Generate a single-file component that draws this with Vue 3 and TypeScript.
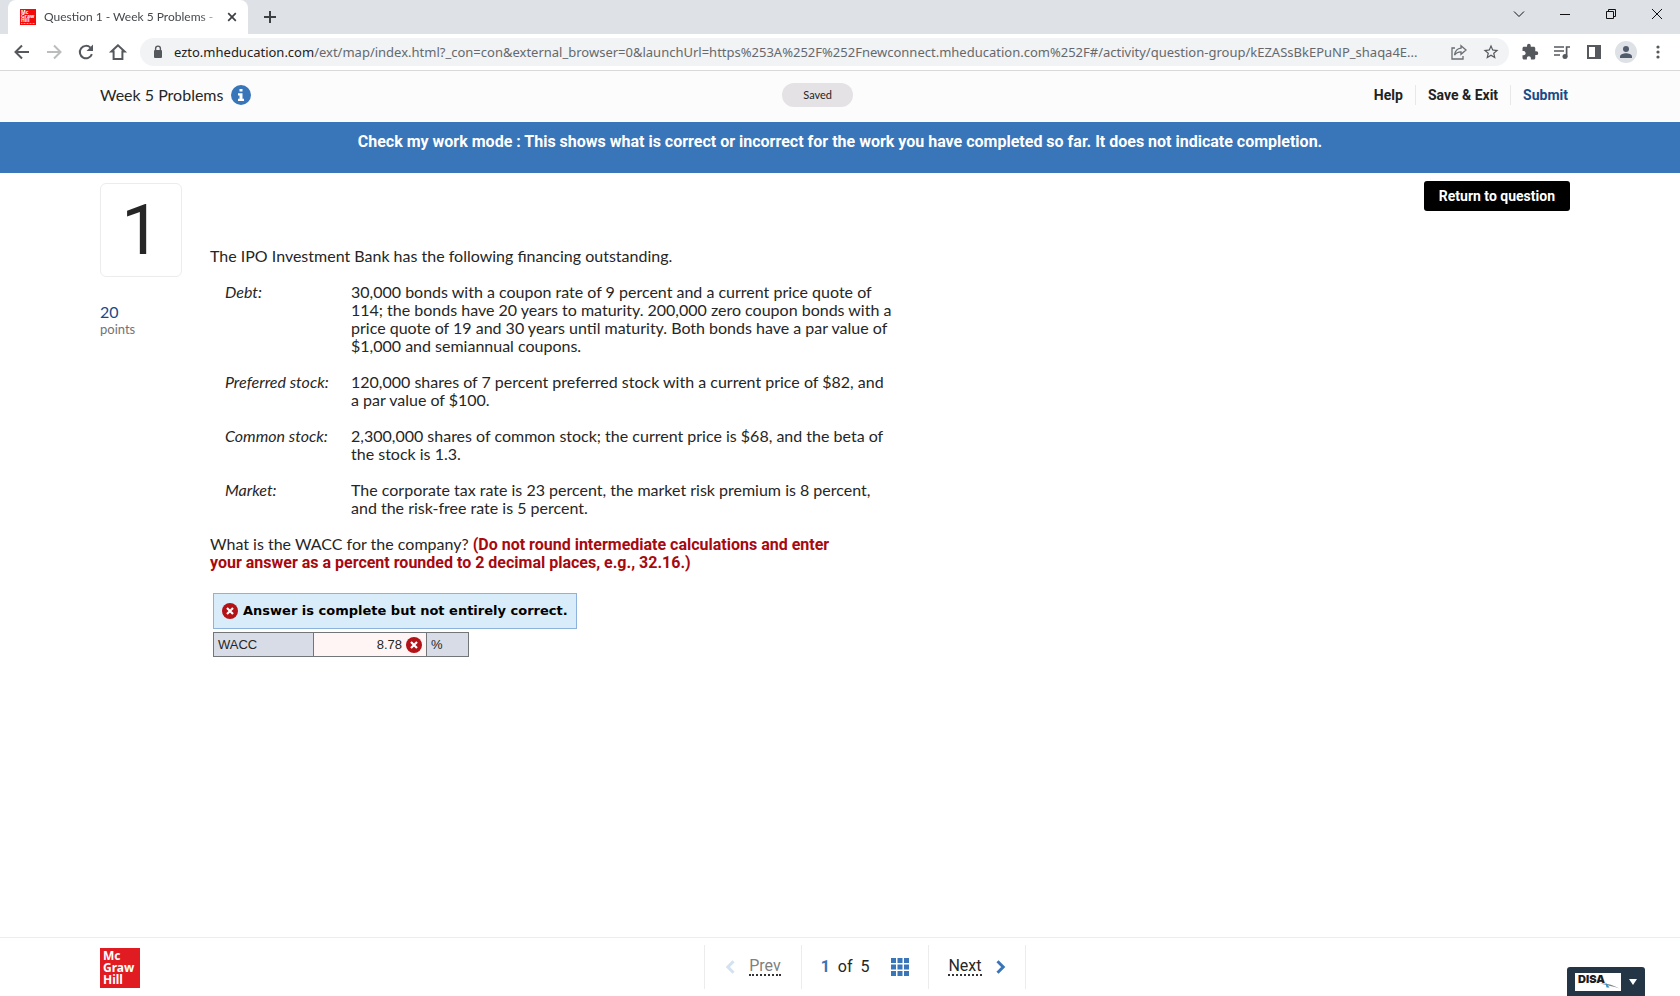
<script setup lang="ts">
import { ref } from 'vue'

interface Financing {
  term: string
  detail: string
}

const urlHost = 'ezto.mheducation.com'
const urlPath =
  '/ext/map/index.html?_con=con&external_browser=0&launchUrl=https%253A%252F%252Fnewconnect.mheducation.com%252F#/activity/question-group/kEZASsBkEPuNP_shaqa4E...'

const financing: Financing[] = [
  {
    term: 'Debt:',
    detail:
      '30,000 bonds with a coupon rate of 9 percent and a current price quote of 114; the bonds have 20 years to maturity. 200,000 zero coupon bonds with a price quote of 19 and 30 years until maturity. Both bonds have a par value of $1,000 and semiannual coupons.',
  },
  {
    term: 'Preferred stock:',
    detail:
      '120,000 shares of 7 percent preferred stock with a current price of $82, and a par value of $100.',
  },
  {
    term: 'Common stock:',
    detail:
      '2,300,000 shares of common stock; the current price is $68, and the beta of the stock is 1.3.',
  },
  {
    term: 'Market:',
    detail:
      'The corporate tax rate is 23 percent, the market risk premium is 8 percent, and the risk-free rate is 5 percent.',
  },
]

const answer = ref('8.78')
const question = 1
const total = 5
</script>

<template>
  <div class="window">
    <div class="tabstrip">
      <div class="tab">
        <svg class="favicon" viewBox="0 0 16 16" aria-hidden="true">
          <rect width="16" height="16" fill="#f50a0a" />
          <g fill="#fff" font-family="Open Sans, sans-serif" font-weight="700" font-size="5">
            <text x="1" y="5">Mc</text>
            <text x="1" y="9">Graw</text>
            <text x="1" y="13">Hill</text>
          </g>
          <path d="M1 14.5h14" stroke="#fff" stroke-dasharray="1 .5" opacity=".6" />
        </svg>
        <span class="tab-title">Question 1 - Week 5 Problems - C</span>
        <button class="icon-btn tab-close" aria-label="Close tab">
          <svg width="16" height="16" viewBox="0 0 16 16"><path d="M4.2 4.2l7.6 7.6M11.8 4.2l-7.6 7.6" stroke="#3c4043" stroke-width="1.7" /></svg>
        </button>
      </div>
      <button class="icon-btn new-tab" aria-label="New tab">
        <svg width="16" height="16" viewBox="0 0 16 16"><path d="M8 2v12M2 8h12" stroke="#3c4043" stroke-width="2" /></svg>
      </button>
      <div class="window-controls">
        <button class="win-btn" aria-label="Search tabs">
          <svg width="12" height="12" viewBox="0 0 12 12"><path d="M1 3.5l5 5 5-5" /></svg>
        </button>
        <button class="win-btn" aria-label="Minimize">
          <svg width="12" height="12" viewBox="0 0 12 12"><path d="M1 6.5h10" /></svg>
        </button>
        <button class="win-btn" aria-label="Restore">
          <svg width="12" height="12" viewBox="0 0 12 12"><path d="M1.5 3.5h7v7h-7zM3.5 3V1.500h7v7H9" /></svg>
        </button>
        <button class="win-btn" aria-label="Close">
          <svg width="12" height="12" viewBox="0 0 12 12"><path d="M1 1l10 10M11 1L1 11" /></svg>
        </button>
      </div>
    </div>

    <div class="toolbar">
      <button class="icon-btn" aria-label="Back">
        <svg width="20" height="20" viewBox="0 0 20 20"><path d="M17 10H4M10 3.500L3.500 10l6.500 6.500" fill="none" stroke="#55595d" stroke-width="2" /></svg>
      </button>
      <button class="icon-btn" aria-label="Forward" disabled>
        <svg width="20" height="20" viewBox="0 0 20 20"><path d="M3 10h13M10 3.500l6.500 6.500-6.500 6.500" fill="none" stroke="#babcbe" stroke-width="2" /></svg>
      </button>
      <button class="icon-btn" aria-label="Reload">
        <svg width="20" height="20" viewBox="0 0 20 20">
          <path d="M15.900 12.200a6.200 6.200 0 1 1-1.500-6.600" fill="none" stroke="#55595d" stroke-width="2" />
          <path d="M17 2.500v6.500h-6.500z" fill="#55595d" />
        </svg>
      </button>
      <button class="icon-btn" aria-label="Home">
        <svg width="20" height="20" viewBox="0 0 20 20"><path d="M10 3.300L3.400 9.500h2.200v7.500h8.800V9.500h2.200z" fill="none" stroke="#55595d" stroke-width="2" /></svg>
      </button>

      <div class="omnibox">
        <svg class="lock" width="16" height="16" viewBox="0 0 16 16" aria-hidden="true">
          <rect x="4" y="6" width="8" height="8" rx="1" fill="#55595d" />
          <path d="M5.600 6V4.500a2.400 2.400 0 0 1 4.800 0V6" fill="none" stroke="#55595d" stroke-width="1.400" />
        </svg>
        <span class="url"><span class="host">{{ urlHost }}</span>{{ urlPath }}</span>
        <button class="icon-btn" aria-label="Share this page">
          <svg width="18" height="18" viewBox="0 0 18 18" fill="none" stroke="#6a6e72" stroke-width="1.300">
            <path d="M5 5H2v11h11v-3" />
            <path d="M11 2.700l5 4.300-5 4.300V8.800c-3 0-5 1-6.500 3.400C5 8.500 7.500 5.500 11 5.200z" />
          </svg>
        </button>
        <button class="icon-btn" aria-label="Bookmark this tab">
          <svg width="18" height="18" viewBox="0 0 24 24"><path d="M22 9.240l-7.190-.62L12 2 9.190 8.630 2 9.240l5.460 4.730L5.820 21 12 17.270 18.180 21l-1.630-7.030L22 9.240zM12 15.400l-3.760 2.270 1-4.280-3.320-2.880 4.380-.38L12 6.100l1.710 4.040 4.380.38-3.320 2.880 1 4.280L12 15.400z" fill="#55595d" /></svg>
        </button>
      </div>

      <div class="actions">
        <button class="icon-btn" aria-label="Extensions">
          <svg width="18" height="18" viewBox="0 0 24 24"><path d="M20.500 11H19V7c0-1.100-.9-2-2-2h-4V3.500a2.500 2.500 0 0 0-5 0V5H4c-1.100 0-1.990.9-1.990 2v3.800H3.500c1.490 0 2.700 1.210 2.700 2.700s-1.210 2.700-2.700 2.700H2V20c0 1.100.9 2 2 2h3.800v-1.500c0-1.490 1.210-2.700 2.700-2.700s2.700 1.210 2.700 2.700V22H17c1.100 0 2-.9 2-2v-4h1.500a2.500 2.500 0 0 0 0-5z" fill="#55595d" /></svg>
        </button>
        <button class="icon-btn" aria-label="Media controls">
          <svg width="18" height="18" viewBox="0 0 18 18">
            <path d="M1 4h10M1 8h10M1 12h6M13.600 14V4H17" fill="none" stroke="#55595d" stroke-width="1.700" />
            <circle cx="12" cy="13.500" r="2.500" fill="#55595d" />
          </svg>
        </button>
        <button class="icon-btn" aria-label="Side panel">
          <svg width="18" height="18" viewBox="0 0 18 18"><path d="M2 2h14v14H2zM4 4v10h6V4z" fill="#55595d" fill-rule="evenodd" /></svg>
        </button>
        <button class="icon-btn avatar" aria-label="Profile">
          <svg width="22" height="22" viewBox="0 0 22 22">
            <circle cx="11" cy="11" r="11" fill="#dee1e6" />
            <circle cx="11" cy="8" r="3" fill="#525b6c" />
            <path d="M5 17v-1.500c0-2.200 3.800-3.300 6-3.300s6 1.100 6 3.300V17z" fill="#525b6c" />
          </svg>
        </button>
        <button class="icon-btn" aria-label="Browser menu">
          <svg width="18" height="18" viewBox="0 0 18 18" fill="#55595d">
            <circle cx="9" cy="4" r="1.600" /><circle cx="9" cy="9" r="1.600" /><circle cx="9" cy="14" r="1.600" />
          </svg>
        </button>
      </div>
    </div>

    <header class="header">
      <div class="assignment">
        <h1>Week 5 Problems</h1>
        <button class="icon-btn" aria-label="Assignment information">
          <svg width="20" height="20" viewBox="0 0 20 20">
            <circle cx="10" cy="10" r="10" fill="#3875b9" />
            <path d="M8.500 4h3v2.500h-3zM7 8.200h4.500v5.500H13V16H7v-2.300h1.500v-3.200H7z" fill="#fff" />
          </svg>
        </button>
      </div>
      <span class="saved" role="status">Saved</span>
      <nav class="links">
        <a href="#help">Help</a>
        <a href="#exit">Save &amp; Exit</a>
        <a href="#submit" class="submit">Submit</a>
      </nav>
    </header>

    <div class="banner">
      Check my work mode : This shows what is correct or incorrect for the work you have completed so far. It does not indicate completion.
    </div>

    <main class="main">
      <aside class="side">
        <div class="number">{{ question }}</div>
        <div class="score">20</div>
        <div class="score-label">points</div>
      </aside>

      <section class="problem">
        <p>The IPO Investment Bank has the following financing outstanding.</p>
        <dl class="financing">
          <template v-for="item in financing" :key="item.term">
            <dt>{{ item.term }}</dt>
            <dd>{{ item.detail }}</dd>
          </template>
        </dl>
        <p class="ask">
          What is the WACC for the company?
          <strong>(Do not round intermediate calculations and enter your answer as a percent rounded to 2 decimal places, e.g., 32.16.)</strong>
        </p>

        <div class="verdict">
          <svg width="16" height="16" viewBox="0 0 16 16" aria-hidden="true">
            <circle cx="8" cy="8" r="8" fill="#b31217" />
            <path d="M5 5l6 6M11 5l-6 6" stroke="#fff" stroke-width="2.200" />
          </svg>
          <span>Answer is complete but not entirely correct.</span>
        </div>

        <table class="answer">
          <tbody>
            <tr>
              <th scope="row"><label for="wacc">WACC</label></th>
              <td class="value">
                <div class="value-row">
                  <input id="wacc" v-model="answer" type="text" readonly />
                  <svg width="16" height="16" viewBox="0 0 16 16" aria-label="Incorrect">
                    <circle cx="8" cy="8" r="8" fill="#b31217" />
                    <path d="M5 5l6 6M11 5l-6 6" stroke="#fff" stroke-width="2.200" />
                  </svg>
                </div>
              </td>
              <td class="unit">%</td>
            </tr>
          </tbody>
        </table>
      </section>

      <button class="return">Return to question</button>
    </main>

    <footer class="footer">
      <div class="logo"><span>Mc</span><span>Graw</span><span>Hill</span></div>
      <nav class="pager">
        <button class="cell prev" disabled>
          <svg width="10" height="14" viewBox="0 0 10 14"><path d="M8.500 1.200L2.800 7l5.700 5.800" fill="none" stroke="#d3e1f0" stroke-width="3" /></svg>
          <span>Prev</span>
        </button>
        <div class="cell position">
          <span><b>{{ question }}</b>&nbsp; of &nbsp;{{ total }}</span>
          <button class="icon-btn" aria-label="Question list">
            <svg width="18" height="18" viewBox="0 0 18 18"><path d="M0 0h5v5H0zM6.500 0h5v5h-5zM13 0h5v5h-5zM0 6.500h5v5H0zM6.500 6.500h5v5h-5zM13 6.500h5v5h-5zM0 13h5v5H0zM6.500 13h5v5h-5zM13 13h5v5h-5z" fill="#3875b9" /></svg>
          </button>
        </div>
        <button class="cell next">
          <span>Next</span>
          <svg width="10" height="14" viewBox="0 0 10 14"><path d="M1.500 1.200L7.200 7l-5.700 5.800" fill="none" stroke="#3875b9" stroke-width="3" /></svg>
        </button>
      </nav>
    </footer>

    <button class="widget" aria-label="DISA menu">
      <svg width="46" height="18" viewBox="0 0 46 18" aria-hidden="true">
        <rect width="46" height="18" fill="#fff" />
        <text x="3" y="10" font-family="Inter, Arial, sans-serif" font-weight="900" font-size="11" fill="#1b1d20">DISA</text>
        <path d="M25 10.500c7-.5 13 1.500 19.500 5-6-2-12-3.300-19.500-5z" fill="#7c858c" />
        <path d="M30.500 9.500l4 5h-3z" fill="#2f8fc5" />
      </svg>
      <svg width="8" height="6" viewBox="0 0 8 6" aria-hidden="true"><path d="M0 0h8L4 6z" fill="#fff" /></svg>
    </button>
  </div>
</template>

<style>
body {
  margin: 0;
  background: #fff;
}
</style>

<style scoped>
* {
  box-sizing: border-box;
}

.window {
  position: relative;
  display: flex;
  flex-direction: column;
  min-height: 100vh;
  font-family: Lato, 'Liberation Sans', sans-serif;
  font-size: 16px;
  line-height: 18px;
  color: #262626;
}

button {
  font: inherit;
  color: inherit;
  border: 0;
  padding: 0;
  background: none;
}

svg {
  display: block;
  flex: none;
}

.icon-btn {
  display: flex;
  align-items: center;
  justify-content: center;
  flex: none;
}

/* Browser frame */
.tabstrip {
  display: flex;
  align-items: stretch;
  height: 34px;
  padding-left: 8px;
  background: #dee1e6;
}

.tab {
  display: flex;
  align-items: center;
  width: 240px;
  padding: 0 8px 0 12px;
  gap: 8px;
  background: #fff;
  border-radius: 8px 8px 0 0;
  font-size: 12px;
  color: #45494d;
}

.favicon {
  width: 16px;
  height: 16px;
}

.tab-title {
  flex: 1;
  min-width: 0;
  white-space: nowrap;
  mask-image: linear-gradient(to right, #000 156px, transparent 180px);
}

.new-tab {
  width: 44px;
}

.window-controls {
  display: flex;
  margin-left: auto;
}

.win-btn {
  display: flex;
  align-items: center;
  justify-content: center;
  width: 46px;
  height: 28px;
}

.win-btn path {
  fill: none;
  stroke: #111;
}

.toolbar {
  display: flex;
  align-items: center;
  height: 37px;
  padding: 0 13px 0 12px;
  gap: 12px;
  border-bottom: 1px solid #d9d9da;
}

.omnibox {
  display: flex;
  flex: 1;
  min-width: 0;
  align-items: center;
  gap: 14px;
  height: 28px;
  padding: 0 9px 0 10px;
  border-radius: 14px;
  background: #f1f3f4;
  font-family: 'Noto Sans', sans-serif;
  font-size: 13px;
  color: #65696d;
}

.lock {
  margin-right: -6px;
}

.url {
  flex: 1;
  min-width: 0;
  overflow: hidden;
  white-space: nowrap;
}

.host {
  color: #202124;
}

.actions {
  display: flex;
  align-items: center;
  gap: 14px;
}

.avatar {
  margin: 0 -2px;
}

/* Assignment header */
.header {
  display: flex;
  align-items: center;
  justify-content: space-between;
  height: 51px;
  padding: 0 112px 4px 100px;
  background: #fcfcfc;
}

.assignment {
  display: flex;
  align-items: center;
  gap: 8px;
  padding-right: 10px;
}

h1 {
  margin: 0;
  font-size: 16px;
  font-weight: 400;
}

.saved {
  padding: 3px 21px;
  border-radius: 12px;
  background: #e4e2e5;
  font-size: 11px;
}

.links {
  display: flex;
  font-family: Roboto, sans-serif;
  font-size: 14px;
  font-weight: 700;
}

.links a {
  padding: 1px 12px;
  color: #222;
  text-decoration: none;
}

.links a + a {
  border-left: 1px solid #e8e8e8;
}

.links a:first-child {
  padding-left: 0;
}

.links .submit {
  padding-right: 0;
  color: #174a88;
}

.banner {
  min-height: 51px;
  padding: 11px 16px;
  background: #3875b9;
  color: #fff;
  font-family: Roboto, sans-serif;
  font-weight: 700;
  text-align: center;
}

/* Question */
.main {
  display: flex;
  flex: 1;
  align-items: flex-start;
  padding: 0 110px 0 100px;
}

.side {
  width: 82px;
  margin: 10px 28px 0 0;
}

.number {
  display: flex;
  align-items: center;
  justify-content: center;
  height: 94px;
  margin-bottom: 26px;
  border: 1px solid #ececec;
  border-radius: 6px;
  font-family: Roboto, sans-serif;
  font-size: 70px;
  line-height: 94px;
}

.score {
  color: #174a88;
}

.score-label {
  font-size: 13px;
  line-height: 16px;
  color: #737373;
}

.problem {
  width: 680px;
  padding-top: 74px;
}

p,
dl,
dd {
  margin: 0;
}

.financing {
  display: grid;
  grid-template-columns: 126px 542px;
  row-gap: 18px;
  margin: 18px 0 18px 15px;
}

dt {
  font-style: italic;
}

.ask {
  width: 640px;
}

strong {
  font-family: Roboto, sans-serif;
  line-height: 16px;
  color: #a8090f;
}

.verdict {
  display: flex;
  align-items: center;
  gap: 5px;
  width: fit-content;
  height: 36px;
  margin: 22px 0 3px 3px;
  padding: 0 8px;
  border: 1px solid #8db3dc;
  background: #d9ecfa;
  color: #000;
  font-family: 'DejaVu Sans', Verdana, sans-serif;
  font-size: 13px;
  font-weight: 700;
}

.answer {
  margin-left: 3px;
  border-collapse: collapse;
  font-family: 'Liberation Sans', Arial, sans-serif;
  font-size: 13px;
}

.answer th,
.answer td {
  height: 24px;
  padding: 0 4px;
  border: 1px solid #737679;
  background: #d8dce7;
  font-weight: 400;
  text-align: left;
}

.answer th {
  width: 100px;
}

.answer .value {
  background: #fff5f4;
}

.answer .unit {
  width: 42px;
}

.value-row {
  display: flex;
  align-items: center;
  gap: 4px;
}

.value-row input {
  width: 84px;
  padding: 0;
  border: 0;
  outline: 0;
  background: none;
  font: inherit;
  color: inherit;
  text-align: right;
}

.return {
  height: 30px;
  margin: 8px 0 0 auto;
  padding: 0 15px;
  border-radius: 3px;
  background: #000;
  color: #fff;
  font-family: Roboto, sans-serif;
  font-size: 14px;
  font-weight: 700;
}

/* Footer */
.footer {
  display: flex;
  align-items: center;
  height: 59px;
  padding: 0 110px 0 100px;
  border-top: 1px solid #ededed;
}

.logo {
  display: flex;
  flex-direction: column;
  width: 40px;
  height: 40px;
  margin-top: 2px;
  padding: 2px 3px;
  background: #e11b22;
  color: #fff;
  font-family: 'Noto Sans', sans-serif;
  font-size: 12px;
  font-weight: 700;
  line-height: 12px;
}

.pager {
  display: flex;
  height: 44px;
  margin: 0 auto;
  padding-left: 20px;
  font-family: Roboto, sans-serif;
}

.cell {
  display: flex;
  align-items: center;
  justify-content: center;
  border-left: 1px solid #ececec;
}

.prev {
  width: 97px;
  gap: 14px;
}

.position {
  width: 127px;
  gap: 22px;
}

.position b {
  color: #3875b9;
}

.next {
  width: 98px;
  gap: 14px;
  border-right: 1px solid #ececec;
}

.prev span,
.next span {
  border-bottom: 2px dotted #333;
  line-height: 16px;
}

.prev span {
  color: #808080;
}

.widget {
  position: absolute;
  right: 35px;
  bottom: 0;
  display: flex;
  align-items: center;
  justify-content: center;
  gap: 8px;
  width: 78px;
  height: 29px;
  border-radius: 3px 3px 0 0;
  background: #243546;
}
</style>
